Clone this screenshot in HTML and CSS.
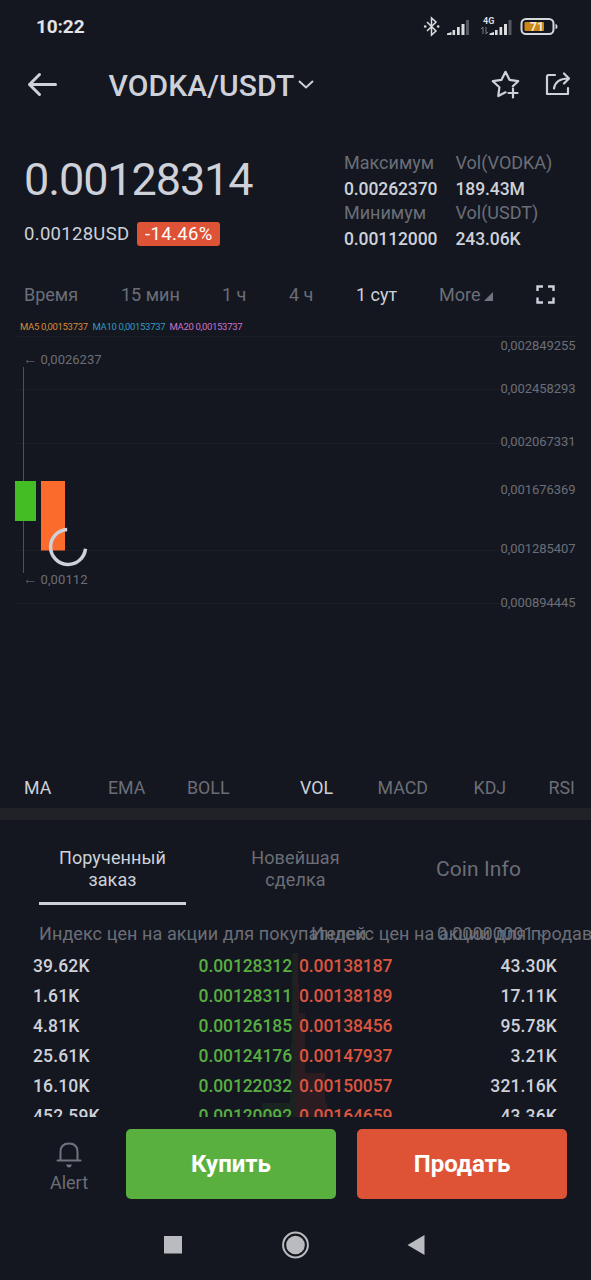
FILE: index.html
```html
<!DOCTYPE html>
<html lang="ru">
<head>
    <meta charset="UTF-8">
    <meta name="viewport" content="width=device-width, initial-scale=1.0">
    <title>VODKA/USDT</title>
    <link rel="stylesheet" href="styles.css">
</head>
<body>
<div class="screen">
    <div class="status-bar">
        <span class="clock">10:22</span>
        <svg class="status-icons" width="136" height="24" viewBox="0 0 136 24">
            <g fill="none" stroke="#dcdde0" stroke-width="1.5">
                <path d="M7 8 L16 17 L11.5 21 V4 L16 8 L7 17"/>
            </g>
            <g fill="#dcdde0">
                <circle cx="5.200" cy="12.500" r="1.300"/>
                <circle cx="18.200" cy="12.500" r="1.300"/>
                <path d="M27 21v-1.500l4.500-1.500v3zM32.500 21v-5h2.600v5zM37 21v-8h2.700v8zM41.500 21v-11h3v11z"/>
                <path d="M69.500 21v-1.500l4.500-1.500v3zM75 21v-5h2.600v5zM79.500 21v-8h2.700v8zM84 21v-11h3v11z"/>
            </g>
            <g fill="#555860">
                <path d="M46 21v-15h3v15zM88.500 21v-15h3v15z"/>
            </g>
            <path d="M63 20v-7l-2 2M66 13v7l2-2" fill="none" stroke="#777a82" stroke-width="1"/>
            <text class="net" x="63" y="9.500">4G</text>
            <rect x="101.500" y="5" width="32" height="15" rx="4.500" fill="none" stroke="#d5d7dc" stroke-width="2"/>
            <rect x="104.500" y="8" width="19.500" height="9" rx="1" fill="#cc8616"/>
            <path d="M135.500 10q2 0 2 2.500t-2 2.500z" fill="#d5d7dc"/>
            <text class="charge" x="117" y="17">71</text>
        </svg>
    </div>

    <div class="header">
        <svg class="back" width="32" height="26" viewBox="0 0 32 26" fill="none" stroke="#ced1da" stroke-width="3" stroke-linecap="round" stroke-linejoin="round">
            <path d="M28.500 12.500H2.500M12.500 2.500L2.500 12.500l10 10"/>
        </svg>
        <h1>VODKA/USDT</h1>
        <svg class="chevron" width="16" height="10" viewBox="0 0 16 10" fill="none" stroke="#ced1da" stroke-width="2">
            <path d="M1 1l7 6.500 7-6.500"/>
        </svg>
        <svg class="star" width="30" height="30" viewBox="0 0 30 30" fill="none" stroke="#ced1da" stroke-width="2.200" stroke-linejoin="round" stroke-linecap="round">
            <path d="M14.500 22.300L7.300 26l1.100-8.800L1.800 11.200l8.700-1.400L14.500 1.800l4 8 8.700 1.400-5.400 5"/>
            <path d="M22 18.500v9M17.500 23h9"/>
        </svg>
        <svg class="share" width="26" height="26" viewBox="0 0 26 26" fill="none" stroke="#ced1da" stroke-width="2.200" stroke-linejoin="round" stroke-linecap="round">
            <path d="M10 3H3.500Q2 3 2 4.500V22h21v-6"/>
            <path d="M9 16.500C10 10 14 6.500 23.500 6.500M19 1.500l5 5-5 5"/>
        </svg>
    </div>

    <div class="ticker">
        <div class="price">
            <div class="last">0.00128314</div>
            <div class="usd"><span>0.00128USD</span><span class="change">-14.46%</span></div>
        </div>
        <div class="stats">
            <span class="label">Максимум</span><span class="label">Vol(VODKA)</span>
            <span class="value">0.00262370</span><span class="value">189.43M</span>
            <span class="label">Минимум</span><span class="label">Vol(USDT)</span>
            <span class="value">0.00112000</span><span class="value">243.06K</span>
        </div>
    </div>

    <div class="intervals">
        <span>Время</span>
        <span>15 мин</span>
        <span>1 ч</span>
        <span>4 ч</span>
        <span class="active">1 сут</span>
        <span class="more">More<i class="corner"></i></span>
        <svg width="20" height="20" viewBox="0 0 20 20" fill="none" stroke="#ced1da" stroke-width="2.400">
            <path d="M1.500 6V1.500H7M12 1.500h5.500V6M17.500 12.500v5H12M7 17.500H1.500V12.500"/>
        </svg>
    </div>

    <svg class="chart" width="591" height="455" viewBox="0 315 591 455">
        <g class="ma">
            <text x="20" y="330" textLength="68" fill="#d98a3a">MA5 0,00153737</text>
            <text x="92.500" y="330" textLength="73" fill="#3398c4">MA10 0,00153737</text>
            <text x="169.500" y="330" textLength="73" fill="#cf72cb">MA20 0,00153737</text>
        </g>
        <path class="grid" d="M15 336.500H576M15 389.500H576M15 443.500H576M15 550.500H576M15 603.500H576"/>
        <g class="axis">
            <text x="500.500" y="349.500" textLength="75">0,002849255</text>
            <text x="500.500" y="392.500" textLength="75">0,002458293</text>
            <text x="500.500" y="446" textLength="75">0,002067331</text>
            <text x="500.500" y="494" textLength="75">0,001676369</text>
            <text x="500.500" y="553" textLength="75">0,001285407</text>
            <text x="500.500" y="606.500" textLength="75">0,000894445</text>
            <text x="40.500" y="364" textLength="61">0,0026237</text>
            <text x="40.500" y="584" textLength="47">0,00112</text>
        </g>
        <path d="M26 361.500h8.500M26 581.500h8.500M28 360l-2 1.500 2 1.500M28 580l-2 1.500 2 1.500" fill="none" stroke="#4a4d56"/>
        <rect x="23" y="367" width="1" height="206" fill="#2f6b24"/>
        <rect x="15" y="481" width="21" height="40" fill="#44bd24"/>
        <rect x="41" y="481" width="24" height="69.500" fill="#fb6c2c"/>
        <path class="spinner" d="M67.200 529.500A17.500 17.500 0 1 0 85.500 548.800"/>
    </svg>

    <div class="indicators">
        <span class="active">MA</span>
        <span>EMA</span>
        <span>BOLL</span>
        <span class="active">VOL</span>
        <span>MACD</span>
        <span>KDJ</span>
        <span>RSI</span>
    </div>

    <div class="tabs">
        <div class="tab active">Порученный<br>заказ</div>
        <div class="tab">Новейшая<br>сделка</div>
        <div class="tab info">Coin Info</div>
    </div>

    <div class="book">
        <!-- the titles are wider than their cells and run over each other -->
        <div class="book-head">
            <span>Индекс цен на акции для покупателей</span>
            <span>Индекс цен на акции для продавцов</span>
            <span>0.00000001<i class="caret"></i></span>
        </div>
        <div class="row">
            <div class="bid"><i class="depth" style="width: 3px"></i><span>39.62K</span><b>0.00128312</b></div>
            <div class="ask"><i class="depth" style="width: 3px"></i><b>0.00138187</b><span>43.30K</span></div>
        </div>
        <div class="row">
            <div class="bid"><i class="depth" style="width: 3px"></i><span>1.61K</span><b>0.00128311</b></div>
            <div class="ask"><i class="depth" style="width: 4px"></i><b>0.00138189</b><span>17.11K</span></div>
        </div>
        <div class="row">
            <div class="bid"><i class="depth" style="width: 3px"></i><span>4.81K</span><b>0.00126185</b></div>
            <div class="ask"><i class="depth" style="width: 10px"></i><b>0.00138456</b><span>95.78K</span></div>
        </div>
        <div class="row">
            <div class="bid"><i class="depth" style="width: 4px"></i><span>25.61K</span><b>0.00124176</b></div>
            <div class="ask"><i class="depth" style="width: 10px"></i><b>0.00147937</b><span>3.21K</span></div>
        </div>
        <div class="row">
            <div class="bid"><i class="depth" style="width: 5px"></i><span>16.10K</span><b>0.00122032</b></div>
            <div class="ask"><i class="depth" style="width: 30px"></i><b>0.00150057</b><span>321.16K</span></div>
        </div>
        <div class="row">
            <div class="bid"><i class="depth" style="width: 33px"></i><span>452.59K</span><b>0.00120092</b></div>
            <div class="ask"><i class="depth" style="width: 32px"></i><b>0.00164659</b><span>43.36K</span></div>
        </div>
    </div>

    <div class="actions">
        <div class="alert">
            <svg width="26" height="26" viewBox="0 0 26 26" fill="none" stroke="#71747e" stroke-width="2" stroke-linecap="round">
                <path d="M4.500 18V10Q4.500 1.500 13 1.500T21.500 10V18M1.500 18.500h23"/>
                <path d="M10 22.500h6q-.8 3-3 3T10 22.500z" fill="#71747e" stroke="none"/>
            </svg>
            <span>Alert</span>
        </div>
        <button class="buy">Купить</button>
        <button class="sell">Продать</button>
    </div>

    <div class="nav-bar">
        <svg width="18" height="28" viewBox="0 0 18 28"><rect y="5" width="18" height="17.500" fill="#b9bbc0"/></svg>
        <svg width="28" height="28" viewBox="0 0 28 28"><circle cx="14.500" cy="14" r="12.400" fill="none" stroke="#b9bbc0" stroke-width="2"/><circle cx="14.500" cy="14" r="9.300" fill="#b9bbc0"/></svg>
        <svg width="18" height="28" viewBox="0 0 18 28"><path d="M17.500 4V24L.5 14z" fill="#b9bbc0"/></svg>
    </div>
</div>
</body>
</html>
```
FILE: styles.css
```css
body {
    margin: 0;
    background-color: #14171f;
    color: #ced1da;
    font-family: Roboto, "Noto Sans", sans-serif;
    font-size: 18px;
}
.screen {
    width: 591px;
    height: 1280px;
    overflow: hidden;
    display: flex;
    flex-direction: column;
}
.screen > div, .chart {
    flex-shrink: 0;
    box-sizing: border-box;
}
svg {
    display: block;
    overflow: visible;
}
.status-bar {
    height: 52px;
    padding: 0 35px 0 36px;
    display: flex;
    justify-content: space-between;
    align-items: center;
}
.clock {
    font-size: 19px;
    font-weight: 700;
    color: #e3e4e7;
    letter-spacing: -0.1px;
}
.net {
    font-size: 9px;
    font-weight: 700;
    fill: #dcdde0;
}
.charge {
    font-size: 12px;
    font-weight: 700;
    fill: #f3ead8;
    text-anchor: middle;
}
.header {
    height: 66px;
    padding: 0 20px 0 27px;
    display: flex;
    align-items: center;
}
h1 {
    margin: 0 4px 0 49.5px;
    font-size: 30px;
    font-weight: 500;
    letter-spacing: 0.1px;
}
.star {
    margin-left: auto;
}
.share {
    margin-left: 24px;
}
.ticker {
    height: 157px;
    padding: 33px 24px 0;
    display: flex;
}
.price {
    width: 320px;
}
.last {
    font-size: 45px;
    line-height: 58px;
    letter-spacing: -1.1px;
}
.usd {
    display: flex;
    align-items: center;
    margin-top: 13px;
    line-height: 24px;
    font-size: 18.5px;
    letter-spacing: 0.3px;
}
.change {
    margin-left: 8px;
    padding: 0 7.5px;
    background-color: #de5336;
    border-radius: 3px;
    color: #fff;
    letter-spacing: 0.4px;
}
.stats {
    display: grid;
    grid-template-columns: 111.5px 1fr;
    grid-template-rows: 24px 26px 23.5px 26px;
}
.stats span {
    line-height: 24px;
}
.label, .intervals, .indicators, .tabs, .book-head, .alert {
    color: #6b6e78;
}
.stats .value {
    font-weight: 500;
    font-size: 17.5px;
    line-height: 28px;
    letter-spacing: -0.1px;
}
.intervals {
    height: 39px;
    margin-bottom: 1px;
    padding-left: 24px;
    display: grid;
    grid-template-columns: 97px 101px 67px 67px 83px 97px 20px;
    align-items: center;
}
.active {
    color: #ced1da;
}
.corner {
    display: inline-block;
    margin-left: 4px;
    border-left: 9px solid transparent;
    border-bottom: 9px solid #71747e;
}
.grid {
    stroke: #1b1e26;
}
.ma {
    font-size: 9.5px;
}
.axis {
    font-size: 13px;
    fill: #6b6e78;
}
.spinner {
    fill: none;
    stroke: #ced1da;
    stroke-width: 3.5;
}
.indicators {
    height: 38px;
    padding: 0 0 3px 24px;
    display: grid;
    grid-template-columns: 84px 79px 113px 77.500px 96px 75px 40px;
    align-items: center;
    font-size: 17.8px;
}
.tabs {
    height: 104px;
    padding-left: 39px;
    border-top: 12px solid #202227;
    display: flex;
    gap: 36px;
}
.tab {
    width: 147px;
    height: 85px;
    box-sizing: border-box;
    padding-top: 27px;
    line-height: 21.5px;
    letter-spacing: 0.1px;
    text-align: center;
}
.tab.active {
    border-bottom: 3px solid #ced1da;
}
.info {
    font-size: 21px;
    line-height: 44px;
}
.book {
    height: 205px;
    overflow: hidden;
}
.book-head {
    height: 41px;
    line-height: 43px;
    padding-left: 39px;
    display: grid;
    grid-template-columns: 272px 126px 1fr;
    white-space: nowrap;
    letter-spacing: 0.08px;
}
.book-head span {
    width: 0;
}
.caret {
    display: inline-block;
    width: 6px;
    height: 6px;
    margin: 0 0 4px 5px;
    border-right: 1.5px solid #6b6e78;
    border-bottom: 1.5px solid #6b6e78;
    transform: rotate(45deg);
}
.row {
    display: grid;
    grid-template-columns: 295px 296px;
    height: 30px;
    line-height: 27px;
    font-size: 17.5px;
    font-weight: 500;
    letter-spacing: -0.1px;
}
.bid, .ask {
    position: relative;
    display: flex;
    justify-content: space-between;
}
.bid {
    padding: 0 3px 0 33px;
}
.ask {
    padding: 0 34px 0 4px;
}
.row span {
    letter-spacing: 0.15px;
}
.row b {
    position: relative;
    font-weight: 500;
}
.bid b {
    color: #58ad42;
}
.ask b {
    color: #dc5541;
}
.depth {
    position: absolute;
    top: 0;
    bottom: 0;
}
.bid .depth {
    right: 0;
    background-color: #19231f;
}
.ask .depth {
    left: 0;
    background-color: #2b1c21;
}
.actions {
    height: 93px;
    padding: 12px 24px 0 12px;
    display: flex;
}
.alert {
    width: 114px;
    padding-top: 13px;
    box-sizing: border-box;
    display: flex;
    flex-direction: column;
    align-items: center;
    line-height: 29px;
}
button {
    width: 210px;
    height: 70px;
    border: none;
    border-radius: 5px;
    color: #fff;
    font: 700 24px Roboto, "Noto Sans", sans-serif;
}
.buy {
    background-color: #5ab03f;
}
.sell {
    margin-left: 21px;
    background-color: #de5336;
}
.nav-bar {
    height: 69px;
    padding: 0 166px 0 164px;
    display: flex;
    justify-content: space-between;
    align-items: center;
}
```
